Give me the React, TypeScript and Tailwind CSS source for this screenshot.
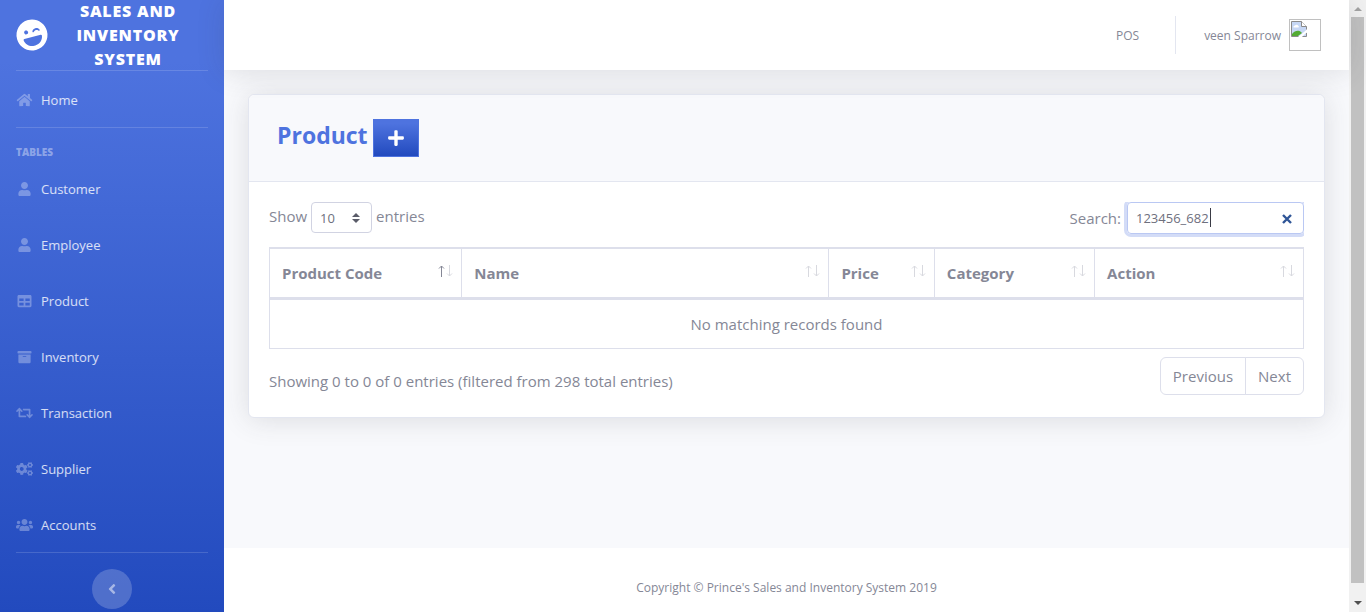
import { useState } from "react";
import type { ReactNode } from "react";
import type { IconType } from "react-icons";
import {
  FaAngleLeft,
  FaArchive,
  FaCogs,
  FaHome,
  FaLaughWink,
  FaPlus,
  FaRetweet,
  FaTable,
  FaUser,
  FaUsers,
} from "react-icons/fa";

const tables: { label: string; icon: IconType }[] = [
  { label: "Customer", icon: FaUser },
  { label: "Employee", icon: FaUser },
  { label: "Product", icon: FaTable },
  { label: "Inventory", icon: FaArchive },
  { label: "Transaction", icon: FaRetweet },
  { label: "Supplier", icon: FaCogs },
  { label: "Accounts", icon: FaUsers },
];

const columns = [
  { label: "Product Code", width: "w-[18.6%]" },
  { label: "Name", width: "w-[35.5%]" },
  { label: "Price", width: "w-[10.2%]" },
  { label: "Category", width: "w-[15.5%]" },
  { label: "Action", width: "w-[20.2%]" },
];

function NavItem({ label, icon: Icon }: { label: string; icon: IconType }) {
  return (
    <a href="#" className="flex h-14 items-center gap-2 px-4 pt-[3px] text-[13px] text-white/80">
      <Icon className="mb-0.5 h-3.5 w-[17px] shrink-0 text-white/30" />
      {label}
    </a>
  );
}

function Divider() {
  return <hr className="mx-4 border-t border-white/15" />;
}

function Sidebar() {
  return (
    <nav className="flex w-56 shrink-0 flex-col bg-linear-to-b from-[#4e73df] from-10% to-[#224abe]">
      <a href="#" className="flex h-[70px] items-center px-4 text-white">
        <FaLaughWink className="size-8 shrink-0 -rotate-15" />
        <span className="grow px-4 text-center text-base leading-6 font-extrabold tracking-wider uppercase">
          Sales and Inventory System
        </span>
      </a>
      <Divider />
      <NavItem label="Home" icon={FaHome} />
      <Divider />
      <h2 className="px-4 pt-4 text-[10px] leading-4 font-extrabold text-white/40 uppercase">Tables</h2>
      <div>
        {tables.map((item) => (
          <NavItem key={item.label} {...item} />
        ))}
      </div>
      <Divider />
      <button
        type="button"
        aria-label="Collapse sidebar"
        className="mx-auto mt-4 flex size-10 items-center justify-center rounded-full bg-white/20 text-base text-white/50"
      >
        <FaAngleLeft />
      </button>
    </nav>
  );
}

function MissingPicture() {
  return (
    <span role="img" className="block size-8 border border-[#c0c0c0] p-px">
      <svg width="16" height="16" viewBox="0 0 16 16">
        <path d="M.5.5h10l5 5v10H.5z" fill="#c6d7f5" />
        <path d="M2.500 6.500a1.500 1.500 0 0 1 1.500-2A2 2 0 0 1 7.500 5a1 1 0 0 1 0 1.500z" fill="#fff" />
        <path d="M1 15v-2c3-4 7-4 9-2l1 1-4 3z" fill="#53ab33" />
        <path d="M7 16 16 8.500V11l-5 5z" fill="#fff" />
        <path d="M7.500 15.500h-7V.5h10l5 5v3M11.500 15.500h4V12" fill="none" stroke="#8b8b8b" />
        <path d="M10.500.5v5h5" fill="#fff" stroke="#8b8b8b" />
      </svg>
    </span>
  );
}

function Topbar() {
  return (
    <header className="relative flex h-[70px] items-center justify-end bg-white pr-7 text-xs shadow-[0_2px_28px_rgba(58,59,69,0.15)]">
      <a href="#" className="pt-0.5">
        POS
      </a>
      <span className="mr-7 ml-9 h-[38px] border-l border-[#e3e6f0]" />
      <a href="#" className="flex items-center gap-2">
        <span className="pt-0.5">veen Sparrow</span>
        <MissingPicture />
      </a>
    </header>
  );
}

function SortArrows({ ascending }: { ascending: boolean }) {
  return (
    <svg width="15" height="12" viewBox="0 0 15 12" fill="none" aria-hidden="true">
      <path d="M3.500 12V1M1 3.500 3.500 1 6 3.500" stroke={ascending ? "#858796" : "#d8d9df"} />
      <path d="M11.500 0v11M9 8.500 11.500 11 14 8.500" stroke="#d8d9df" />
    </svg>
  );
}

function PageButton({ children, side }: { children: ReactNode; side: string }) {
  return (
    <button type="button" className={`h-[38px] border border-[#dddfeb] px-3 ${side}`}>
      {children}
    </button>
  );
}

function ProductCard() {
  const [query, setQuery] = useState("123456_682");
  return (
    <section className="mx-6 mt-6 rounded-md border border-[#e3e6f0] bg-white text-[15px] shadow-[0_2px_28px_rgba(58,59,69,0.15)]">
      <div className="flex gap-[5px] rounded-t-md border-b border-[#e3e6f0] bg-[#f8f9fc] px-7 py-6">
        <h1 className="text-[23px] leading-8 font-bold text-[#4e73df]">Product</h1>
        <button
          type="button"
          aria-label="Add product"
          className="flex h-[38px] w-[46px] items-center justify-center border border-[#4e73df] bg-linear-to-b from-[#4e73df] from-10% to-[#224abe] text-lg text-white"
        >
          <FaPlus />
        </button>
      </div>
      <div className="px-5 pt-5 pb-[22px]">
        <div className="flex items-start justify-between overflow-hidden pb-3">
          <label className="flex gap-1 leading-7">
            Show
            <span className="relative">
              <select className="block h-[31px] w-[61px] appearance-none rounded border border-[#d1d3e2] bg-white pl-2 text-[13px] text-[#6e707e]">
                <option>10</option>
                <option>25</option>
                <option>50</option>
                <option>100</option>
              </select>
              <svg
                width="8"
                height="10"
                viewBox="0 0 4 5"
                className="pointer-events-none absolute top-[11px] right-3"
                aria-hidden="true"
              >
                <path fill="#5a5c69" d="M2 0L0 2h4zm0 5L0 3h4z" />
              </svg>
            </span>
            entries
          </label>
          <div className="flex items-center gap-1.5">
            <label htmlFor="search">Search:</label>
            <span className="relative">
              <input
                id="search"
                value={query}
                onChange={(e) => setQuery(e.target.value)}
                className="block h-8 w-[177px] rounded border border-[#bac8f3] px-2 text-[13px] text-[#6e707e] shadow-[0_0_0_3px_#d3dcf7] outline-none"
              />
              <span className="absolute top-1.5 left-[83px] h-[19px] w-px bg-[#3a3b45]" />
              <button
                type="button"
                aria-label="Clear search"
                onClick={() => setQuery("")}
                className="absolute top-3 right-3"
              >
                <svg width="10" height="10" viewBox="0 0 10 10" aria-hidden="true">
                  <path d="m1 1 8 8M9 1 1 9" stroke="#2f5597" strokeWidth="2.400" />
                </svg>
              </button>
            </span>
          </div>
        </div>
        <table className="mt-px w-full table-fixed border-collapse border border-[#dddfeb]">
          <thead>
            <tr className="border-t-2 border-b-3 border-[#dddfeb]">
              {columns.map((column, i) => (
                <th key={column.label} className={`border-x border-[#dddfeb] px-3 py-3 text-left font-bold ${column.width}`}>
                  <span className="flex items-center justify-between leading-6">
                    {column.label}
                    <span className="-mr-1 pb-1">
                      <SortArrows ascending={i === 0} />
                    </span>
                  </span>
                </th>
              ))}
            </tr>
          </thead>
          <tbody>
            <tr>
              <td colSpan={5} className="p-3 text-center leading-6">
                No matching records found
              </td>
            </tr>
          </tbody>
        </table>
        <div className="flex items-center justify-between pt-2">
          <p className="pt-2.5">Showing 0 to 0 of 0 entries (filtered from 298 total entries)</p>
          <div className="flex">
            <PageButton side="rounded-l-md">Previous</PageButton>
            <PageButton side="-ml-px rounded-r-md">Next</PageButton>
          </div>
        </div>
      </div>
    </section>
  );
}

function ScrollTrack() {
  return (
    <div className="flex w-[17px] shrink-0 flex-col items-center bg-[#f1f1f1]" aria-hidden="true">
      <svg width="17" height="17" viewBox="0 0 17 17">
        <path d="M5 11h8L9 7z" fill="#a3a3a3" />
      </svg>
      <div className="w-[13px] grow bg-[#c1c1c1]" />
      <svg width="17" height="29" viewBox="0 0 17 29">
        <path d="M5 18h8l-4 4z" fill="#505050" />
      </svg>
    </div>
  );
}

export default function App() {
  return (
    <div className="flex min-h-screen bg-[#f8f9fc] font-['Open_Sans','Noto_Sans',sans-serif] text-[#858796]">
      <Sidebar />
      <div className="flex min-w-0 grow flex-col">
        <Topbar />
        <main className="pb-6">
          <ProductCard />
        </main>
        <footer className="mt-auto bg-white pt-8 pb-4 text-center text-xs leading-4">
          Copyright © Prince's Sales and Inventory System 2019
        </footer>
      </div>
      <ScrollTrack />
    </div>
  );
}
